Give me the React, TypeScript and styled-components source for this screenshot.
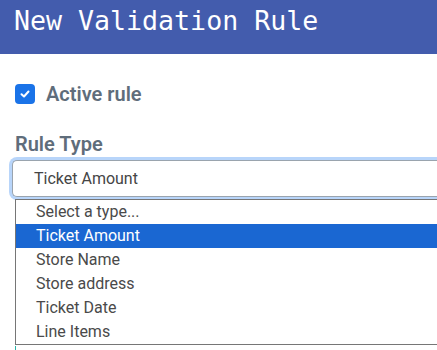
import React from 'react';
import styled, { createGlobalStyle } from 'styled-components';

const GlobalStyle = createGlobalStyle`
  html, body {
    margin: 0;
    padding: 0;
    background: #ffffff;
    overflow: hidden;
  }
  body {
    font-family: Roboto, 'Noto Sans', sans-serif;
  }
`;

const Header = styled.header`
  height: 54px;
  background: #435cad;
  box-sizing: border-box;
  padding: 4px 14px 0;
  color: #ffffff;
  font-family: 'DejaVu Sans Mono', 'Liberation Mono', monospace;
  font-size: 26.6px;
  line-height: 34px;
`;

const Body = styled.div`
  padding: 30px 0 0 15px;
  display: flex;
  flex-direction: column;
`;

const CheckRow = styled.label`
  display: flex;
  align-items: center;
  gap: 11px;
  height: 20px;
  margin-bottom: 30px;
`;

const CheckBox = styled.span`
  width: 20px;
  height: 20px;
  margin-top: -1px;
  border-radius: 4px;
  background: #1a73e8;
  display: flex;
  align-items: center;
  justify-content: center;
`;

const CheckLabel = styled.span`
  font-size: 20px;
  font-weight: 600;
  color: #5f6d7b;
`;

const FieldLabel = styled.div`
  font-size: 20px;
  font-weight: 600;
  color: #5f6d7b;
  line-height: 24px;
  margin-top: -2px;
  margin-bottom: 4px;
`;

const SelectBox = styled.div`
  margin-left: -3px;
  height: 35px;
  border: 1px solid #9aa4ae;
  border-right: none;
  border-radius: 5px 0 0 5px;
  box-shadow: 0 0 0 3px #b8d5fa;
  background: #ffffff;
  display: flex;
  align-items: center;
  padding-left: 21px;
  font-size: 16px;
  color: #454545;
`;

const ListBox = styled.ul`
  list-style: none;
  margin: 2px 0 0;
  padding: 0;
  border: 1px solid #767676;
  border-right: none;
  background: #ffffff;
`;

const Option = styled.li<{ $selected?: boolean }>`
  height: 24px;
  line-height: 24px;
  padding-left: 20px;
  font-size: 16px;
  color: ${({ $selected }) => ($selected ? '#ffffff' : '#4a4a4a')};
  background: ${({ $selected }) => ($selected ? '#1a67d2' : 'transparent')};
`;

const NextField = styled.div`
  margin-top: 1px;
  height: 10px;
  border-left: 1px solid #2ab3a8;
`;

const options = ['Select a type...', 'Ticket Amount', 'Store Name', 'Store address', 'Ticket Date', 'Line Items'];

export default function App() {
  const selected = 'Ticket Amount';
  return (
    <>
      <GlobalStyle />
      <Header>New Validation Rule</Header>
      <Body>
        <CheckRow>
          <CheckBox>
            <svg width="12" height="12" viewBox="0 0 12 12">
              <path d="M2.5 6.2 L5 8.5 L9.5 3.5" fill="none" stroke="#fff" strokeWidth="2" strokeLinecap="round" strokeLinejoin="round" />
            </svg>
          </CheckBox>
          <CheckLabel>Active rule</CheckLabel>
        </CheckRow>
        <FieldLabel>Rule Type</FieldLabel>
        <SelectBox>{selected}</SelectBox>
        <ListBox>
          {options.map((o) => (
            <Option key={o} $selected={o === selected}>
              {o}
            </Option>
          ))}
        </ListBox>
        <NextField />
      </Body>
    </>
  );
}
